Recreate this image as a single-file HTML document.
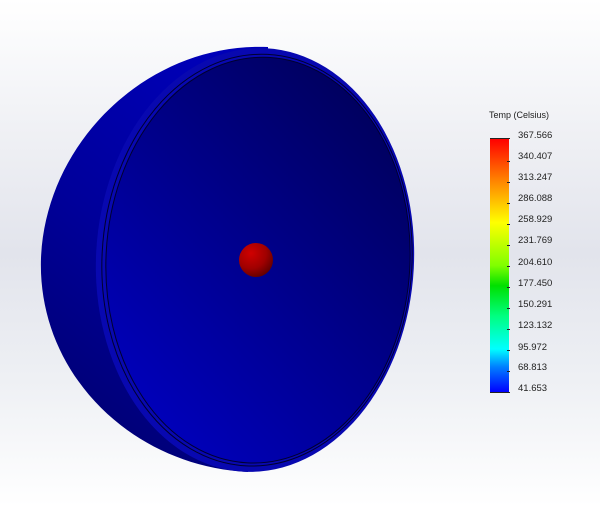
<!DOCTYPE html>
<html><head><style>
html,body{margin:0;padding:0}
body{width:600px;height:506px;overflow:hidden;position:relative;background:linear-gradient(to bottom,#ffffff 0%,#f0f1f5 25%,#e2e4ec 50%,#eef0f4 75%,#ffffff 100%);font-family:"Liberation Sans",sans-serif}
.lbl{position:absolute;left:518px;font-size:9.5px;color:#222;line-height:10px}
.tk{position:absolute;left:507px;width:3px;height:1px;background:#222}
</style></head><body>
<svg width="600" height="506" style="position:absolute;left:0;top:0">
<defs>
<linearGradient id="side" x1="0.7" y1="0" x2="0.3" y2="1">
<stop offset="0" stop-color="#0000b8"/><stop offset="0.5" stop-color="#00009a"/><stop offset="1" stop-color="#000070"/>
</linearGradient>
<linearGradient id="face" x1="0.85" y1="0.05" x2="0.2" y2="0.95">
<stop offset="0" stop-color="#00005a"/><stop offset="1" stop-color="#0000bc"/>
</linearGradient>
<radialGradient id="ball" cx="0.35" cy="0.3" r="0.75">
<stop offset="0" stop-color="#d00000"/><stop offset="0.6" stop-color="#a00000"/><stop offset="1" stop-color="#600000"/>
</radialGradient>
</defs>
<path d="M268,47 C150,42 46,140 41,258 C37,372 130,466 248,472 L250,420 L268,100 Z" fill="url(#side)"/>
<g transform="rotate(3 255 260)">
<ellipse cx="255" cy="260" rx="159" ry="212" fill="#0808b0"/>
<ellipse cx="257" cy="260" rx="155" ry="206" fill="none" stroke="#000030" stroke-width="1"/>
<ellipse cx="258" cy="260" rx="152" ry="203" fill="url(#face)" stroke="#000030" stroke-width="1"/>
</g>
<circle cx="256" cy="260" r="17" fill="url(#ball)"/>
</svg>
<div style="position:absolute;left:489px;top:110px;font-size:9px;color:#222">Temp (Celsius)</div>
<div style="position:absolute;left:490px;top:139px;width:19px;height:253px;background:linear-gradient(to bottom,#ff0000 0%,#ff8000 16%,#ffff00 33%,#80ff00 50%,#00e000 58%,#00ff80 70%,#00ffff 83%,#0080ff 90%,#0000ff 100%)"></div>
<div style="position:absolute;left:490px;top:138px;width:20px;height:1px;background:#222"></div>
<div style="position:absolute;left:490px;top:392px;width:20px;height:1px;background:#222"></div>
<div class="lbl" style="top:131px">367.566</div>
<div class="lbl" style="top:152px">340.407</div>
<div class="lbl" style="top:173px">313.247</div>
<div class="lbl" style="top:194px">286.088</div>
<div class="lbl" style="top:215px">258.929</div>
<div class="lbl" style="top:236px">231.769</div>
<div class="lbl" style="top:258px">204.610</div>
<div class="lbl" style="top:279px">177.450</div>
<div class="lbl" style="top:300px">150.291</div>
<div class="lbl" style="top:321px">123.132</div>
<div class="lbl" style="top:343px">95.972</div>
<div class="lbl" style="top:363px">68.813</div>
<div class="lbl" style="top:384px">41.653</div>
<div class="tk" style="top:161px"></div><div class="tk" style="top:182px"></div><div class="tk" style="top:203px"></div><div class="tk" style="top:224px"></div><div class="tk" style="top:245px"></div><div class="tk" style="top:266px"></div><div class="tk" style="top:287px"></div><div class="tk" style="top:308px"></div><div class="tk" style="top:329px"></div><div class="tk" style="top:350px"></div><div class="tk" style="top:371px"></div>
</body></html>
